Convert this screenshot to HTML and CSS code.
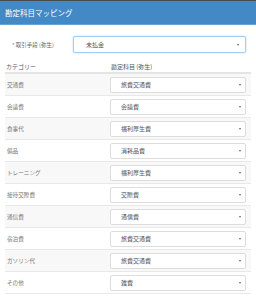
FILE: index.html
```html
<!DOCTYPE html>
<html lang="ja">
<head>
<meta charset="utf-8">
<link rel="stylesheet" href="styles.css">
</head>
<body>
<div class="modal">
  <div class="modal-header">勘定科目マッピング</div>
  <div class="modal-body">
    <div class="form-row">
      <label class="form-label">* 取引手段 (弥生)</label>
      <div class="select select-focus"><span>未払金</span><span class="caret"></span></div>
    </div>
    <div class="table">
      <div class="thead">
        <div class="th">カテゴリー</div>
        <div class="th">勘定科目 (弥生)</div>
      </div>
      <div class="tr odd"><div class="td">交通費</div><div class="td"><div class="select"><span>旅費交通費</span><span class="caret"></span></div></div></div>
      <div class="tr"><div class="td">会議費</div><div class="td"><div class="select"><span>会議費</span><span class="caret"></span></div></div></div>
      <div class="tr odd"><div class="td">食事代</div><div class="td"><div class="select"><span>福利厚生費</span><span class="caret"></span></div></div></div>
      <div class="tr"><div class="td">備品</div><div class="td"><div class="select"><span>消耗品費</span><span class="caret"></span></div></div></div>
      <div class="tr odd"><div class="td">トレーニング</div><div class="td"><div class="select"><span>福利厚生費</span><span class="caret"></span></div></div></div>
      <div class="tr"><div class="td">接待交際費</div><div class="td"><div class="select"><span>交際費</span><span class="caret"></span></div></div></div>
      <div class="tr odd"><div class="td">通信費</div><div class="td"><div class="select"><span>通信費</span><span class="caret"></span></div></div></div>
      <div class="tr"><div class="td">宿泊費</div><div class="td"><div class="select"><span>旅費交通費</span><span class="caret"></span></div></div></div>
      <div class="tr odd"><div class="td">ガソリン代</div><div class="td"><div class="select"><span>旅費交通費</span><span class="caret"></span></div></div></div>
      <div class="tr"><div class="td">その他</div><div class="td"><div class="select"><span>雑費</span><span class="caret"></span></div></div></div>
    </div>
  </div>
</div>
</body>
</html>
```
FILE: styles.css
```css
html, body {
  margin: 0;
  padding: 0;
  background: #ffffff;
}
body {
  font-family: "Noto Sans CJK JP", "Noto Sans", sans-serif;
  color: #555;
}
.modal {
  width: 256px;
  border-top: 1px solid #4a4a4a;
}
.modal-header {
  height: 23px;
  line-height: 23px;
  background: #4289c6;
  border-bottom: 1px solid #6aa3d6;
  color: #fff;
  font-size: 7.5px;
  padding-left: 5px;
}
.modal-body {
  padding: 11px 5px 0 5px;
}
.form-row {
  display: flex;
  align-items: center;
  height: 17px;
}
.form-label {
  width: 68px;
  padding-left: 7px;
  box-sizing: border-box;
  font-size: 5.5px;
  color: #666;
}
.select {
  flex: 1;
  height: 17px;
  box-sizing: border-box;
  border: 1px solid #ddd;
  border-radius: 2px;
  background: #fff;
  display: flex;
  align-items: center;
  justify-content: space-between;
  padding: 0 4px 0 9px;
  font-size: 6px;
  color: #555;
}
.form-row .select {
  margin-right: 5px;
}
.select-focus {
  border-color: #a7cdef;
  box-shadow: 0 0 2px rgba(102, 175, 233, 0.5);
  padding-left: 12px;
  padding-right: 6px;
}
.caret {
  width: 0;
  height: 0;
  border-left: 1.5px solid transparent;
  border-right: 1.5px solid transparent;
  border-top: 2px solid #666;
}
.table {
  margin-top: 8px;
}
.thead {
  display: grid;
  grid-template-columns: 105px 1fr;
  height: 13px;
  align-items: center;
  border-bottom: 2px solid #e4e4e4;
  box-sizing: border-box;
  font-size: 6px;
  color: #555;
}
.th {
  padding-left: 1px;
}
.tr {
  display: grid;
  grid-template-columns: 105px 1fr;
  height: 22px;
  align-items: center;
  border-bottom: 1px solid #e8e8e8;
  box-sizing: border-box;
  font-size: 5.6px;
  color: #777;
}
.tr.odd {
  background: #f8f8f8;
}
.td:first-child {
  padding-left: 2px;
}
.td:last-child {
  padding-right: 5px;
}
.tr .select {
  height: 16px;
  padding-left: 10px;
}
```
